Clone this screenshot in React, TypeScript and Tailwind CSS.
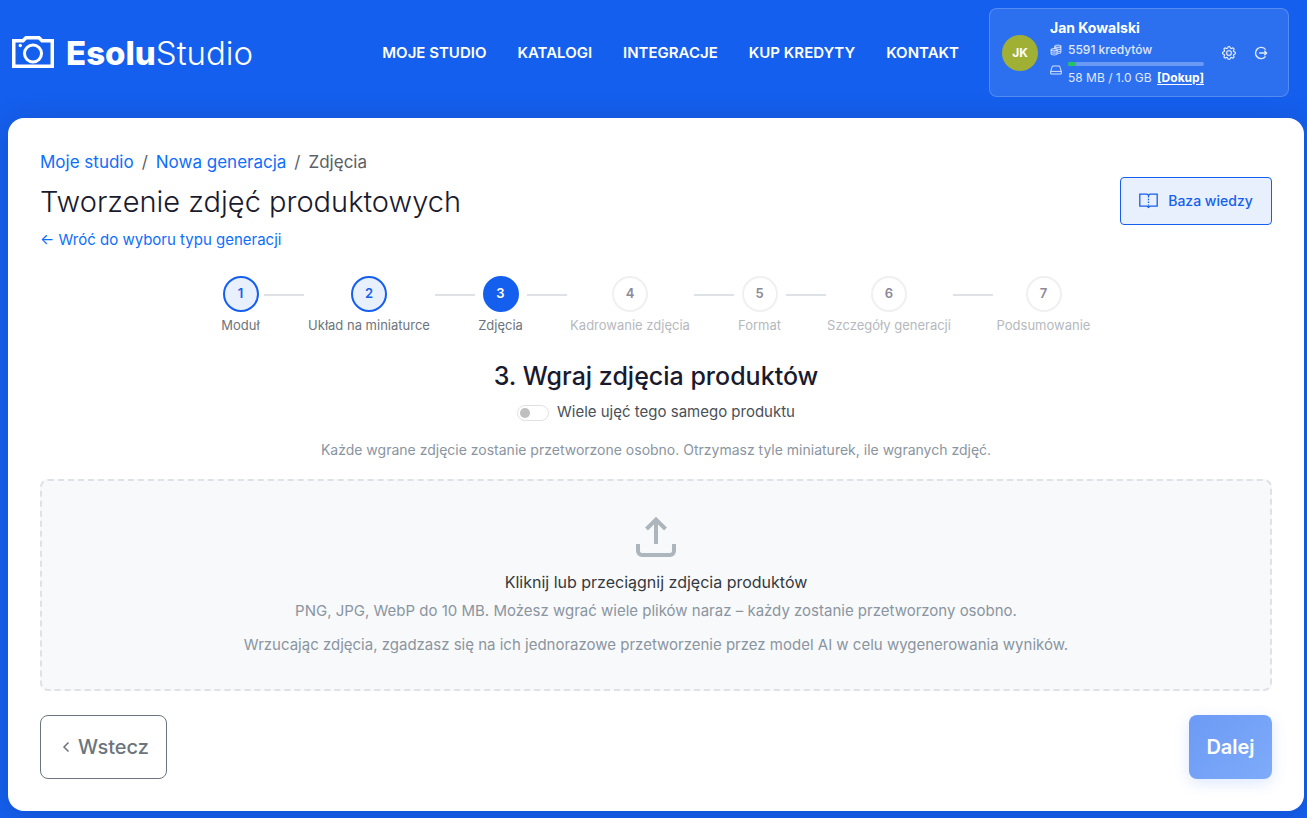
import { useState } from "react";
import { BsGear } from "react-icons/bs";

const navLinks = ["Moje studio", "Katalogi", "Integracje", "Kup kredyty", "Kontakt"];

const steps = [
    { label: "Moduł", width: "w-[38px]" },
    { label: "Układ na miniaturce", width: "w-[123px]" },
    { label: "Zdjęcia", width: "w-[44px]" },
    { label: "Kadrowanie zdjęcia", width: "w-[119px]" },
    { label: "Format", width: "w-[44px]" },
    { label: "Szczegóły generacji", width: "w-[119px]" },
    { label: "Podsumowanie", width: "w-[94px]" },
];

const CameraLogo = () => (
    <svg width="42" height="33" viewBox="0 0 42 33" fill="none" stroke="white" aria-hidden="true">
        <path d="M1.75 4.75H11L14 1.75H27L30 4.75H40.25V30.25H1.75Z" strokeWidth="3.5" />
        <circle cx="21" cy="17.5" r="8.5" strokeWidth="3" />
        <circle cx="8.3" cy="9.5" r="1.7" fill="white" stroke="none" />
    </svg>
);

const CoinsIcon = () => (
    <svg width="12" height="12" viewBox="0 0 12 12" fill="none" stroke="currentColor" strokeWidth="1.1" aria-hidden="true">
        <ellipse cx="7.8" cy="2.4" rx="3.1" ry="1.4" fill="currentColor" fillOpacity="0.4" />
        <path d="M4.7 2.4V5M10.9 2.4V8C10.9 8.8 9.6 9.4 7.8 9.5M10.9 4.3C10.9 5.1 9.6 5.7 7.8 5.8M10.9 6.2C10.9 7 9.6 7.6 7.8 7.7" />
        <ellipse cx="4.2" cy="5.8" rx="3.1" ry="1.3" fill="currentColor" fillOpacity="0.4" />
        <path d="M1.1 5.8V9.6C1.1 10.4 2.4 11 4.2 11S7.3 10.4 7.3 9.6V5.8M1.1 7.7C1.1 8.5 2.4 9.1 4.2 9.1S7.3 8.5 7.3 7.7" />
    </svg>
);

const DriveIcon = () => (
    <svg width="12" height="12" viewBox="0 0 12 12" fill="none" stroke="currentColor" className="shrink-0" aria-hidden="true">
        <path d="M2.4 2H9.6L11.3 7.4V10H0.7V7.4ZM0.7 7.4H11.3" />
    </svg>
);

const LogoutIcon = () => (
    <svg width="14" height="14" viewBox="0 0 14 14" fill="none" stroke="currentColor" strokeWidth="1.4" aria-hidden="true">
        <path d="M11.6 3.6A5.6 5.6 0 1 0 11.6 10.4" />
        <path d="M5.2 7H12.6M10.4 4.8L12.6 7L10.4 9.2" />
    </svg>
);

const BookIcon = () => (
    <svg width="19" height="16" viewBox="0 0 19 16" fill="none" stroke="currentColor" strokeWidth="1.3" aria-hidden="true">
        <path d="M9.5 2.3L8.1 1.2H0.8V13.2H8.1L9.5 14.3L10.9 13.2H18.2V1.2H10.9Z" />
        <path d="M9.5 3V14" strokeDasharray="1.4 1.4" />
    </svg>
);

const UploadIcon = () => (
    <svg width="42" height="42" viewBox="0 0 42 42" fill="none" stroke="#adb5bd" strokeWidth="4" aria-hidden="true">
        <path d="M3 28V35A4 4 0 0 0 7 39H35A4 4 0 0 0 39 35V28" />
        <path d="M21 28V2.5M11.5 13L21 3.5L30.5 13" />
    </svg>
);

const Header = () => (
    <header className="flex items-center pt-2 pr-[18px] pl-3">
        <a href="#" className="flex items-center gap-3 text-white">
            <CameraLogo />
            <span className="text-[33px] leading-10">
                <strong className="font-extrabold">Esolu</strong>
                <span className="font-light">Studio</span>
            </span>
        </a>
        <nav className="mr-[30px] ml-auto flex gap-[31px]">
            {navLinks.map((link) => (
                <a key={link} href="#" className="text-[15px] leading-6 font-semibold whitespace-nowrap text-white uppercase">
                    {link}
                </a>
            ))}
        </nav>
        <div className="flex h-[89px] w-[300px] items-center rounded-lg border border-white/20 bg-white/10 pl-3 text-white">
            <div className="flex size-9 items-center justify-center rounded-full bg-[#a0b035] text-xs font-bold">JK</div>
            <div className="ml-3 w-[154px]">
                <div className="text-sm leading-5 font-bold">Jan Kowalski</div>
                <div className="flex items-center gap-1.5 text-xs leading-6 font-medium text-white/85">
                    <span className="text-white/70">
                        <CoinsIcon />
                    </span>
                    5591 kredytów
                </div>
                <div className="flex gap-1.5 text-white/80">
                    <div className="pt-0.5">
                        <DriveIcon />
                    </div>
                    <div className="flex-1">
                        <div className="h-1 overflow-hidden rounded-full bg-white/30">
                            <div className="h-full w-[6%] bg-[#22c55e]" />
                        </div>
                        <div className="mt-0.5 flex justify-between text-xs leading-5 whitespace-nowrap text-white/85">
                            58 MB / 1.0 GB
                            <a href="#" className="font-bold text-white underline underline-offset-2">
                                [Dokup]
                            </a>
                        </div>
                    </div>
                </div>
            </div>
            <button type="button" aria-label="Ustawienia" className="ml-[18px] text-white/85">
                <BsGear className="size-3.5" strokeWidth={0.4} />
            </button>
            <button type="button" aria-label="Wyloguj" className="ml-[18px] text-white/85">
                <LogoutIcon />
            </button>
        </div>
    </header>
);

const Stepper = ({ current }: { current: number }) => (
    <ol className="mt-6 flex justify-center gap-1">
        {steps.map((step, i) => {
            const number = i + 1;
            let circle = "border-[#f0f0f0] bg-white text-[#8c8a98]";
            if (number < current) circle = "border-[#155fee] bg-[#e8effd] text-[#155fee]";
            if (number === current) circle = "border-[#155fee] bg-[#155fee] text-white";

            return (
                <li key={step.label} className="flex gap-1">
                    <div className={`flex flex-col items-center ${step.width}`}>
                        <span className={`flex size-9 shrink-0 items-center justify-center rounded-full border-2 text-[13px] font-semibold ${circle}`}>
                            {number}
                        </span>
                        <span className={`mt-1 text-[13px] leading-[18px] whitespace-nowrap ${number > current ? "text-[#b5b9bd]" : "text-[#6c757d]"}`}>
                            {step.label}
                        </span>
                    </div>
                    {number < steps.length && <span className="mt-[18px] h-0.5 w-10 bg-[#dee2e6]" />}
                </li>
            );
        })}
    </ol>
);

const App = () => {
    const [multiShot, setMultiShot] = useState(false);

    return (
        <div className="min-h-screen bg-[#155fee] pb-[7px] font-['Inter',sans-serif]">
            <Header />
            <main className="mt-[21px] mr-[3px] ml-2 rounded-2xl bg-white p-8 shadow-[0_4px_30px_rgba(0,0,0,0.15)]">
                <div className="flex items-center justify-between">
                    <div>
                        <nav aria-label="Ścieżka" className="flex gap-2 text-[17px] leading-6 text-[#5b6065]">
                            <a href="#" className="text-[#0d6efd]">Moje studio</a>
                            <span>/</span>
                            <a href="#" className="text-[#0d6efd]">Nowa generacja</a>
                            <span>/</span>
                            <span>Zdjęcia</span>
                        </nav>
                        <h1 className="mt-2.5 text-[29px] leading-9 font-light text-[#1a1a2e]">Tworzenie zdjęć produktowych</h1>
                        <a href="#" className="mt-2 block text-[15px] leading-6 text-[#0d6efd]">
                            ← Wróć do wyboru typu generacji
                        </a>
                    </div>
                    <a href="#" className="flex h-12 w-[152px] items-center justify-center gap-2.5 rounded border border-[#155fee] bg-[#e8effd] text-sm font-medium text-[#155fee]">
                        <BookIcon />
                        Baza wiedzy
                    </a>
                </div>

                <Stepper current={3} />

                <h2 className="mt-6 text-center text-[25px] leading-9 font-medium text-[#1a1a2e]">3. Wgraj zdjęcia produktów</h2>
                <label className="mt-1.5 flex items-center justify-center gap-2 text-[15px] leading-6 text-[#495057]">
                    <input
                        type="checkbox"
                        role="switch"
                        checked={multiShot}
                        onChange={(e) => setMultiShot(e.target.checked)}
                        className="mt-0.5 h-4 w-8 appearance-none rounded-full border border-[#dee2e6] bg-white p-0.5 before:block before:size-2.5 before:rounded-full before:bg-[#bfbfbf] checked:bg-[#155fee] checked:before:translate-x-4 checked:before:bg-white"
                    />
                    Wiele ujęć tego samego produktu
                </label>
                <p className="mt-3.5 text-center text-sm leading-6 text-[#8a959f]">
                    Każde wgrane zdjęcie zostanie przetworzone osobno. Otrzymasz tyle miniaturek, ile wgranych zdjęć.
                </p>

                <button type="button" className="mt-[17px] flex w-full flex-col items-center rounded-lg border-2 border-dashed border-[#dee2e6] bg-[#f8f9fb] pt-[35px] pb-8">
                    <UploadIcon />
                    <span className="mt-3 text-base leading-6 text-[#343a40]">Kliknij lub przeciągnij zdjęcia produktów</span>
                    <span className="mt-[5px] text-[15px] leading-6 text-[#8a959f]">
                        PNG, JPG, WebP do 10 MB. Możesz wgrać wiele plików naraz – każdy zostanie przetworzony osobno.
                    </span>
                    <span className="mt-2.5 text-[15px] leading-6 text-[#8a959f]">
                        Wrzucając zdjęcia, zgadzasz się na ich jednorazowe przetworzenie przez model AI w celu wygenerowania wyników.
                    </span>
                </button>

                <div className="mt-6 flex justify-between">
                    <button type="button" className="flex h-16 w-[127px] items-center justify-center gap-2 rounded-lg border border-[#6c757d] pl-1 text-xl font-medium text-[#6c757d]">
                        <svg width="8" height="12" viewBox="0 0 8 12" fill="none" stroke="currentColor" strokeWidth="1.5" aria-hidden="true">
                            <path d="M6.5 1.5L2 6L6.5 10.5" />
                        </svg>
                        Wstecz
                    </button>
                    <button
                        type="button"
                        className="h-16 w-[83px] rounded-lg bg-linear-135 from-[#6c9af5] to-[#7eabf9] text-xl font-semibold text-white shadow-[0_4px_15px_rgba(21,95,238,0.15)]"
                    >
                        Dalej
                    </button>
                </div>
            </main>
        </div>
    );
};

export default App;
